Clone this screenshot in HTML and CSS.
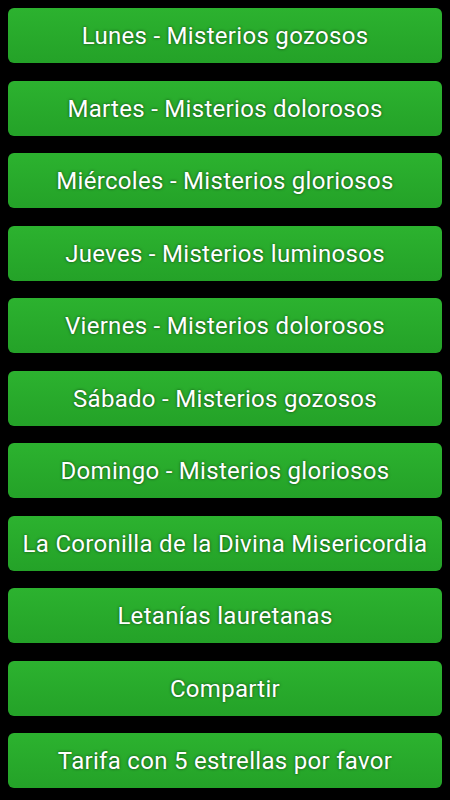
FILE: index.html
```html
<!DOCTYPE html>
<html lang="es">
<head>
  <meta charset="UTF-8">
  <meta name="viewport" content="width=device-width, initial-scale=1.0">
  <title>Santo Rosario</title>
  <link rel="stylesheet" href="styles.css">
</head>
<body>
  <div class="menu">
    <button class="menu-btn">Lunes - Misterios gozosos</button>
    <button class="menu-btn">Martes - Misterios dolorosos</button>
    <button class="menu-btn">Miércoles - Misterios gloriosos</button>
    <button class="menu-btn">Jueves - Misterios luminosos</button>
    <button class="menu-btn">Viernes - Misterios dolorosos</button>
    <button class="menu-btn">Sábado - Misterios gozosos</button>
    <button class="menu-btn">Domingo - Misterios gloriosos</button>
    <button class="menu-btn">La Coronilla de la Divina Misericordia</button>
    <button class="menu-btn">Letanías lauretanas</button>
    <button class="menu-btn">Compartir</button>
    <button class="menu-btn">Tarifa con 5 estrellas por favor</button>
  </div>
</body>
</html>
```

FILE: styles.css
```css
html, body {
  margin: 0;
  background: #000;
}
body {
  font-family: Roboto, 'Noto Sans', sans-serif;
}
.menu {
  display: flex;
  flex-direction: column;
  gap: 17.5px;
  padding: 8px;
}
.menu-btn {
  height: 55px;
  border: none;
  border-radius: 6px;
  background: linear-gradient(to bottom, #2cb22f, #24a228);
  color: #fff;
  font-family: inherit;
  font-size: 24px;
  letter-spacing: 0.3px;
  text-shadow: 0 0 3px rgba(0, 0, 0, 0.6);
  padding: 1px 0 0;
  cursor: pointer;
}
.menu-btn:hover {
  background: linear-gradient(to bottom, #33bd36, #28ab2c);
}
```
